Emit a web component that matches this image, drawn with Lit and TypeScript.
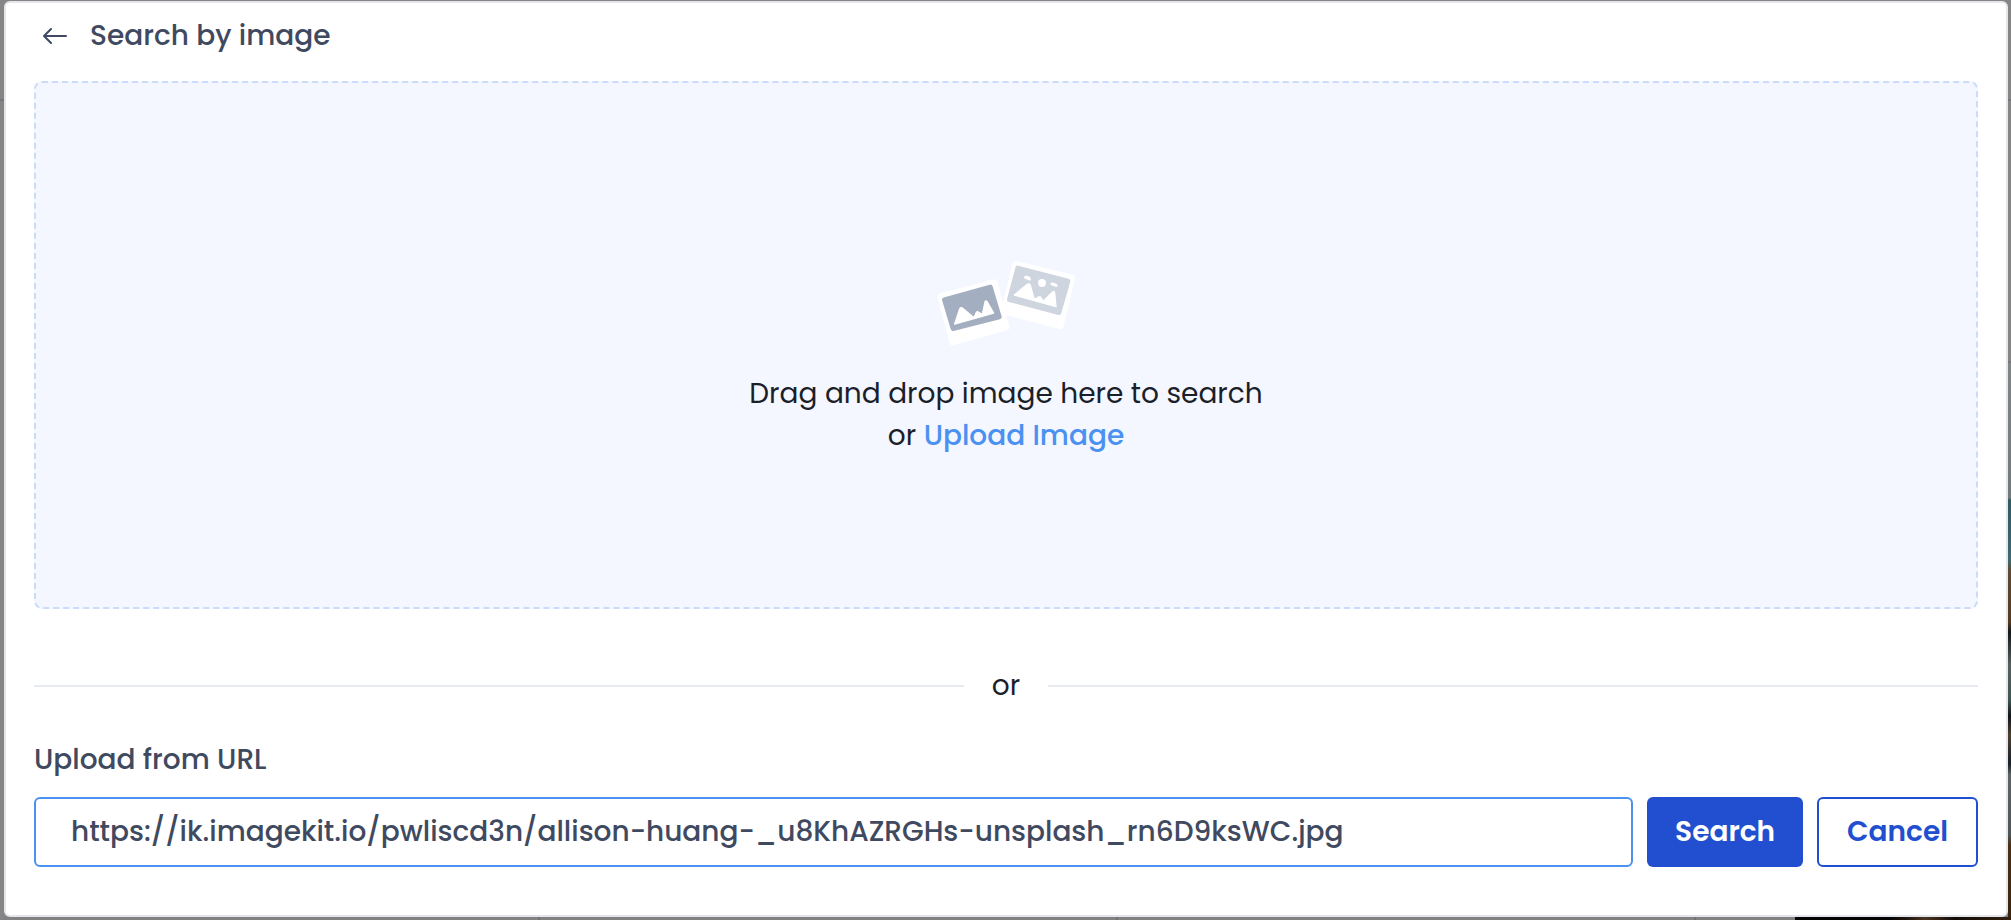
import { LitElement, html, css } from "lit";
import { customElement, state } from "lit/decorators.js";

@customElement("app-root")
export class AppRoot extends LitElement {
  static styles = css`
    :host {
      display: flex;
      box-sizing: border-box;
      min-height: 100vh;
      padding: 1px 3px 3px 4px;
      background:
        linear-gradient(to right, #050404 0 94px, #1d130b 110px, #4a3423 130px, #120c08 160px, #332010 100%) right bottom / 216px 3px no-repeat,
        linear-gradient(to bottom,
          #858585 0 99px, #77777b 99px 101px, #858585 101px 361px, #77777b 361px 363px, #808586 363px,
          #70797c 498px, #2e5a63 500px, #3c6a70 560px, #5e4a35 570px, #553a1f 622px,
          #14181a 632px, #53605e 665px, #3f5551 700px, #10151c 716px, #4d3f31 735px,
          #17202a 764px, #5d6466 775px, #4e5557 835px, #4a2f14 845px, #3a240f 100%) right top / 3px 100% no-repeat,
        linear-gradient(to bottom, #858585 0 99px, #77777b 99px 101px, #858585 101px) left top / 4px 100% no-repeat,
        repeating-linear-gradient(to right, #828282 0 538px, #737376 538px 540px, #828282 540px 578px) left bottom / 100% 3px no-repeat,
        #858585;
      font-family: Poppins, Inter, sans-serif;
      font-size: 28px;
      line-height: 42px;
      color: #1b1f2a;
    }
    *, *::before, *::after { box-sizing: border-box; }
    .dialog {
      flex: 1;
      min-width: 0;
      display: flex;
      flex-direction: column;
      padding: 12px 28px 48px;
      border: 2px solid #e5e6eb;
      border-radius: 6px;
      background: #fff;
    }
    .header { display: flex; align-items: center; gap: 24px; padding: 0 8px; margin-bottom: 24px; }
    .title { margin: 0; font-size: 28px; font-weight: 500; color: #3f4a60; }
    button { font: inherit; cursor: pointer; }
    .back { display: flex; padding: 0; border: 0; background: none; color: #3f4a60; }
    .arrow { width: 24px; height: 24px; overflow: visible; }
    .drop {
      flex: 1;
      display: flex;
      flex-direction: column;
      align-items: center;
      justify-content: center;
      border: 2px dashed #cbdcfb;
      border-radius: 8px;
      background: #f4f7ff;
      text-align: center;
    }
    .art { width: 180px; height: 116px; }
    .hint { margin: 24px 0 0; }
    .link { padding: 0; border: 0; background: none; color: #4b91f1; font-weight: 500; }
    .divider { display: flex; align-items: center; gap: 28px; margin: 56px 0 32px; }
    .divider::before, .divider::after { content: ""; flex: 1; height: 2px; background: #e8eaf1; }
    .label { font-weight: 500; color: #3f4a60; margin-bottom: 16px; }
    .row { display: flex; gap: 14px; }
    .url {
      flex: 1;
      min-width: 0;
      height: 70px;
      padding: 0 35px;
      border: 2px solid #4b91f1;
      border-radius: 6px;
      background: #fff;
      font: inherit;
      font-weight: 500;
      color: #3f4a60;
      outline: 0;
    }
    .btn {
      height: 70px;
      padding: 0 28px;
      border: 2px solid #224fcf;
      border-radius: 6px;
      background: #fff;
      color: #224fcf;
      font-weight: 600;
    }
    .primary { border: 0; background: #224fcf; color: #fff; }
  `;

  @state() private url = "https://ik.imagekit.io/pwliscd3n/allison-huang-_u8KhAZRGHs-unsplash_rn6D9ksWC.jpg";

  private photos() {
    return html`
      <svg class="art" viewBox="-12 -21 540 348" aria-hidden="true" stroke-linejoin="round">
        <g fill="#fff" stroke="#fff" stroke-width="20">
          <path d="M287 73 L455 114 L421 257 L253 214 Z" />
        </g>
        <path d="M293 84 L444 123 L417 218 L268 179 Z" fill="#ced5df" stroke="#ced5df" stroke-width="14" />
        <g fill="#fff" stroke="#fff" stroke-width="4">
          <path d="M283 165 L322 133 Q328 129 331 136 L343 179 L355 171 Q360 168 363 173 L370 184 L398 156 Q403 152 404 159 L408 200 Z" />
          <circle cx="366" cy="129" r="10" />
          <path d="M313 113 Q316 108 322 110 Q328 109 331 117 Q331 121 326 119 Z" />
          <path d="M393 131 Q398 128 403 131 Q409 131 411 138 Q406 139 400 136 Q395 136 393 131 Z" />
        </g>
        <path d="M62 170 L223 128 L258 261 L98 306 Z" fill="#fff" stroke="#fff" stroke-width="20" />
        <path d="M73 179 L211 141 L238 231 L99 266 Z" fill="#a3aec0" stroke="#a3aec0" stroke-width="14" />
        <g fill="#fff" stroke="#fff" stroke-width="4">
          <path d="M104 252 L119 207 Q122 200 128 205 L162 233 L169 217 Q172 213 176 217 L187 224 L195 186 Q197 180 202 186 L221 219 Z" />
        </g>
      </svg>
    `;
  }

  render() {
    return html`
      <main class="dialog">
        <header class="header">
          <button class="back" aria-label="Back">
            <svg class="arrow" viewBox="0 0 24 24" fill="none" stroke="currentColor" stroke-width="2" stroke-linecap="round" stroke-linejoin="round">
              <path d="M2 12 H24 M9 5 L2 12 L9 19" />
            </svg>
          </button>
          <h1 class="title">Search by image</h1>
        </header>
        <section class="drop">
          ${this.photos()}
          <p class="hint">Drag and drop image here to search<br />or <button class="link">Upload Image</button></p>
        </section>
        <div class="divider">or</div>
        <label class="label" for="url">Upload from URL</label>
        <div class="row">
          <input class="url" id="url" type="text" .value=${this.url} />
          <button class="btn primary">Search</button>
          <button class="btn">Cancel</button>
        </div>
      </main>
    `;
  }
}
